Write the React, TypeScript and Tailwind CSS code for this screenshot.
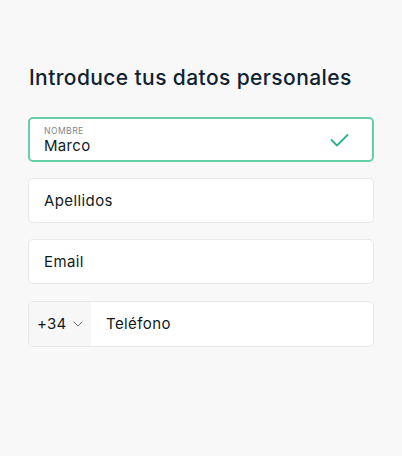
import React from "react";

export default function App() {
  return (
    <div className="w-[402px] h-[456px] bg-[#f8f8f8] px-[28px] pt-[65px]" style={{ fontFamily: "Inter, 'Noto Sans', sans-serif" }}>
      <h1 className="text-[21px] leading-[26px] font-medium text-[#0e2232] pl-[1px] tracking-[0.4px]">Introduce tus datos personales</h1>
      <div className="mt-[26px] flex flex-col gap-[16px]">
        <div className="h-[45px] rounded-[5px] border-2 border-[#66cfa8] bg-white flex items-center pl-[14px] pr-[23px]">
          <div className="flex-1 flex flex-col pt-[1px]">
            <span className="text-[8.5px] leading-[10px] tracking-[0.5px] text-[#7a8590] uppercase">Nombre</span>
            <span className="text-[15px] leading-[19px] tracking-[0.3px] text-[#111a22]">Marco</span>
          </div>
          <svg width="19" height="14" viewBox="0 0 19 14" fill="none">
            <path d="M1.5 7 L7 12.5 L17.5 2" stroke="#2fb386" strokeWidth="1.8" strokeLinecap="round" strokeLinejoin="round" />
          </svg>
        </div>
        <div className="h-[45px] rounded-[5px] border border-[#e8e8e8] bg-white flex items-center pl-[15px] pt-[2px]">
          <span className="text-[15px] tracking-[0.4px] text-[#111a22]">Apellidos</span>
        </div>
        <div className="h-[45px] rounded-[5px] border border-[#e8e8e8] bg-white flex items-center pl-[15px] pt-[2px]">
          <span className="text-[15px] tracking-[0.4px] text-[#111a22]">Email</span>
        </div>
        <div className="h-[46px] mt-[1px] rounded-[5px] border border-[#e8e8e8] bg-white flex overflow-hidden">
          <div className="w-[62px] bg-[#f7f7f7] flex items-center pl-[8px] gap-[6px]">
            <span className="text-[15px] tracking-[0.3px] text-[#111a22]">+34</span>
            <svg width="10" height="6" viewBox="0 0 10 6" fill="none">
              <path d="M1 1 L5 5 L9 1" stroke="#6b7580" strokeWidth="1" strokeLinecap="round" strokeLinejoin="round" />
            </svg>
          </div>
          <div className="flex-1 flex items-center pl-[15px]">
            <span className="text-[15px] tracking-[0.4px] text-[#111a22]">Teléfono</span>
          </div>
        </div>
      </div>
    </div>
  );
}
